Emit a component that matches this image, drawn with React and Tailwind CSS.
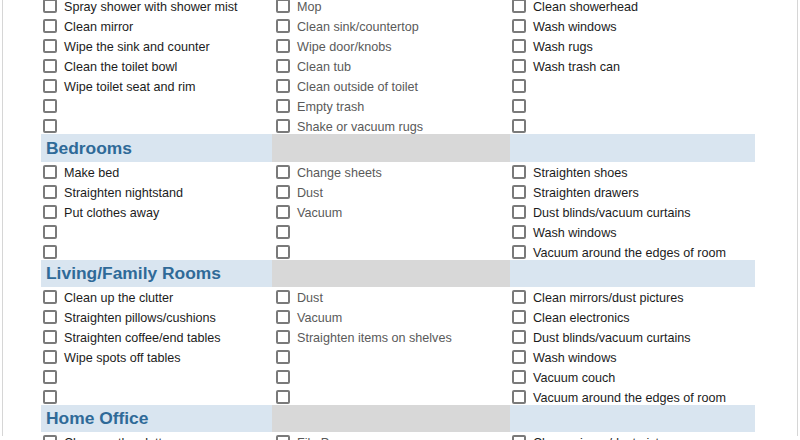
import React from "react";

const sections = [
  {
    title: null,
    rows: [
      ["Spray shower with shower mist", "Mop", "Clean showerhead"],
      ["Clean mirror", "Clean sink/countertop", "Wash windows"],
      ["Wipe the sink and counter", "Wipe door/knobs", "Wash rugs"],
      ["Clean the toilet bowl", "Clean tub", "Wash trash can"],
      ["Wipe toilet seat and rim", "Clean outside of toilet", ""],
      ["", "Empty trash", ""],
      ["", "Shake or vacuum rugs", ""],
    ],
  },
  {
    title: "Bedrooms",
    headerH: "h-[28px]",
    rows: [
      ["Make bed", "Change sheets", "Straighten shoes"],
      ["Straighten nightstand", "Dust", "Straighten drawers"],
      ["Put clothes away", "Vacuum", "Dust blinds/vacuum curtains"],
      ["", "", "Wash windows"],
      ["", "", "Vacuum around the edges of room"],
    ],
  },
  {
    title: "Living/Family Rooms",
    headerH: "h-[27px]",
    rows: [
      ["Clean up the clutter", "Dust", "Clean mirrors/dust pictures"],
      ["Straighten pillows/cushions", "Vacuum", "Clean electronics"],
      ["Straighten coffee/end tables", "Straighten items on shelves", "Dust blinds/vacuum curtains"],
      ["Wipe spots off tables", "", "Wash windows"],
      ["", "", "Vacuum couch"],
      ["", "", "Vacuum around the edges of room"],
    ],
  },
  {
    title: "Home Office",
    headerH: "h-[27px]",
    rows: [
      ["Clean up the clutter", "File Papers", "Clean mirrors/dust pictures"],
      ["", "", ""],
    ],
  },
];

const Box = () => (
  <span className="w-[14px] h-[14px] shrink-0 border-2 border-[#7a7a7a] rounded-[2px] bg-white" />
);

const Item = ({ text, className }) => (
  <div className={`flex items-center gap-[7px] ${className}`}>
    <Box />
    <span className="leading-[14px] pt-[2px] whitespace-nowrap">{text}</span>
  </div>
);

export default function App() {
  return (
    <div
      className="w-[800px] h-[440px] overflow-hidden bg-white text-[12.6px]"
      style={{ fontFamily: '"Liberation Sans", Arial, sans-serif' }}
    >
      <div className="ml-[2px] w-[796px] h-full border-x border-[#d6d6d6]">
        <div className="pl-[38px] -mt-[4px]">
          {sections.map((sec, si) => (
            <div key={si}>
              {sec.title && (
                <div className={`grid grid-cols-[231px_238px_245px] ${sec.headerH}`}>
                  <div className="bg-[#d9e5f0] flex items-center pl-[5px] text-[17.4px] font-bold text-[#2f6a98]">
                    {sec.title}
                  </div>
                  <div className="bg-[#d8d8d8]" />
                  <div className="bg-[#d9e5f0]" />
                </div>
              )}
              <div className="flex flex-col py-[2px] gap-[6px]">
                {sec.rows.map((r, ri) => (
                  <div key={ri} className="grid grid-cols-[231px_238px_245px] h-[14px]">
                    <Item text={r[0]} className="pl-[2px] text-[#1c1c1c]" />
                    <Item text={r[1]} className="pl-[4px] text-[#5a5a5a]" />
                    <Item text={r[2]} className="pl-[2px] text-[#1c1c1c]" />
                  </div>
                ))}
              </div>
            </div>
          ))}
        </div>
      </div>
    </div>
  );
}
